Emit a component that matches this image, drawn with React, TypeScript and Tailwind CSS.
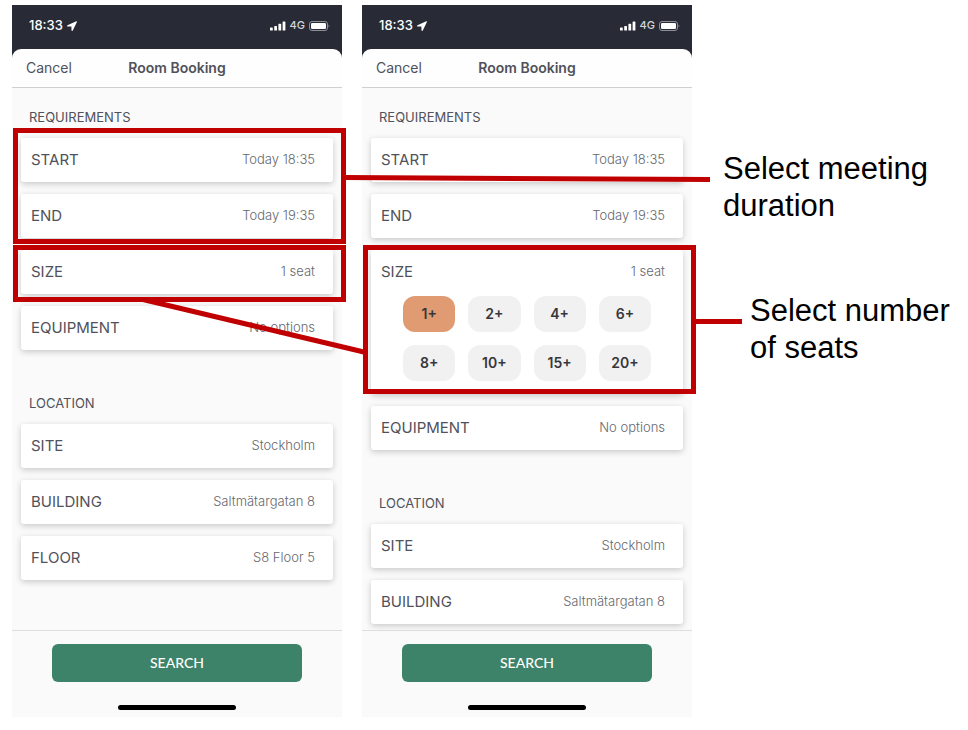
import React, { useState } from 'react';
import clsx from 'clsx';

const SEAT_OPTIONS = [1, 2, 4, 6, 8, 10, 15, 20];

const HIGHLIGHT = 'pointer-events-none absolute -left-2 -right-[13px] z-10 border-[5px] border-[#c00000]';

function StatusBar() {
  return (
    <div className="flex h-11 items-center justify-between pb-[3px] pl-[17px] pr-3 text-white">
      <div className="flex items-center gap-1">
        <span className="text-[13px] font-medium">18:33</span>
        <svg width="10" height="10" viewBox="0 0 10 10" fill="currentColor" aria-hidden="true">
          <path d="M9.3 .2 .5 4.3c-.6.3-.5 1.2.2 1.2h3.7l.1 3.8c0 .8 1 .9 1.3.2L9.9.9c.2-.5-.2-.9-.6-.7z" />
        </svg>
      </div>
      <div className="flex items-center gap-1">
        <svg width="16" height="10" viewBox="0 0 16 10" fill="currentColor" aria-hidden="true">
          <rect x="0" y="6.5" width="2.8" height="3" rx=".6" />
          <rect x="4.2" y="5" width="2.8" height="4.5" rx=".6" />
          <rect x="8.4" y="2.8" width="2.8" height="6.7" rx=".6" />
          <rect x="12.6" y=".5" width="2.8" height="9" rx=".6" />
        </svg>
        <span className="text-[11px] font-medium text-gray-300">4G</span>
        <svg width="21" height="10" viewBox="0 0 21 10" aria-hidden="true">
          <rect x=".5" y=".5" width="18" height="9" rx="2.5" fill="none" stroke="#8d8f96" />
          <rect x="2" y="2" width="15" height="6" rx="1.2" fill="#fff" />
          <path d="M19.6 3.4c1 .3 1 2.9 0 3.2z" fill="#8d8f96" />
        </svg>
      </div>
    </div>
  );
}

interface RowProps {
  label: string;
  value: string;
  children?: React.ReactNode;
}

function Row({ label, value, children }: RowProps) {
  return (
    <div className="rounded-[3px] bg-white shadow-[0_2px_6px_rgba(0,0,0,0.2)]">
      <button type="button" className="flex h-11 w-full items-center justify-between pl-2.5 pr-[18px]">
        <span className="text-[15px] text-[#50515a]">{label}</span>
        <span className="text-[13px] font-light text-[#66676e]">{value}</span>
      </button>
      {children}
    </div>
  );
}

interface SectionProps {
  title: string;
  children: React.ReactNode;
}

function Section({ title, children }: SectionProps) {
  return (
    <section>
      <h2 className="mb-[9px] pl-2 text-[13px] leading-6 text-[#50515a]">{title}</h2>
      <div className="flex flex-col gap-3">{children}</div>
    </section>
  );
}

interface SeatPickerProps {
  seats: number;
  onChange: (seats: number) => void;
}

function SeatPicker({ seats, onChange }: SeatPickerProps) {
  return (
    <div className="grid grid-cols-4 gap-[13px] px-8 pb-[13px] pt-[2px]">
      {SEAT_OPTIONS.map((option) => (
        <button
          key={option}
          type="button"
          aria-pressed={option === seats}
          onClick={() => onChange(option)}
          className={clsx(
            'h-9 rounded-xl text-sm font-semibold text-[#37373b]',
            option === seats ? 'bg-[#e09b72]' : 'bg-[#f1f1f1]',
          )}
        >
          {option}+
        </button>
      ))}
    </div>
  );
}

function Phone({ children }: { children: React.ReactNode }) {
  return (
    <div className="flex flex-1 flex-col bg-[#fafafa] font-['Inter','Liberation_Sans',sans-serif]">
      <div className="bg-[#282b36]">
        <StatusBar />
        <header className="grid h-[39px] grid-cols-3 items-center rounded-t-[9px] border-b border-[#cfcfd2] bg-[#fefefe] px-3.5 text-sm text-[#50515a]">
          <button type="button" className="justify-self-start">
            Cancel
          </button>
          <h1 className="whitespace-nowrap text-center font-semibold">Room Booking</h1>
        </header>
      </div>
      <div className="flex flex-1 flex-col gap-[41px] px-[9px] pt-[17px]">{children}</div>
      <footer className="border-t border-[#dedee0] px-10 pb-[7px] pt-[13px]">
        <button
          type="button"
          className="h-[38px] w-full rounded-md bg-[#3d8369] font-['Lato','Liberation_Sans',sans-serif] text-sm font-medium text-white"
        >
          SEARCH
        </button>
        <div className="mx-auto mt-[23px] h-[5px] w-[118px] rounded-full bg-black" />
      </footer>
    </div>
  );
}

function Connectors() {
  return (
    <svg
      className="pointer-events-none absolute left-0 top-0 z-20"
      width="968"
      height="730"
      stroke="#c00000"
      strokeWidth="5"
      aria-hidden="true"
    >
      <path d="M344 177.5 710 179.5" />
      <path d="M143 299.5 366 352.5" />
      <path d="M694 321.5H742" />
    </svg>
  );
}

function App() {
  const [seats, setSeats] = useState(1);
  const seatLabel = seats === 1 ? '1 seat' : `${seats} seats`;

  return (
    <main className="relative flex min-h-screen bg-white pb-[13px] pl-3 pt-[5px]">
      <div className="flex basis-[680px] gap-5">
        <Phone>
          <Section title="REQUIREMENTS">
            <div className="relative flex flex-col gap-3">
              <Row label="START" value="Today 18:35" />
              <Row label="END" value="Today 19:35" />
              <div className={clsx(HIGHLIGHT, '-bottom-1.5 -top-2.5')} />
            </div>
            <div className="relative">
              <Row label="SIZE" value={seatLabel} />
              <div className={clsx(HIGHLIGHT, '-bottom-2 -top-[5px]')} />
            </div>
            <Row label="EQUIPMENT" value="No options" />
          </Section>
          <Section title="LOCATION">
            <Row label="SITE" value="Stockholm" />
            <Row label="BUILDING" value="Saltmätargatan 8" />
            <Row label="FLOOR" value="S8 Floor 5" />
          </Section>
        </Phone>
        <Phone>
          <Section title="REQUIREMENTS">
            <Row label="START" value="Today 18:35" />
            <Row label="END" value="Today 19:35" />
            <div className="relative">
              <Row label="SIZE" value={seatLabel}>
                <SeatPicker seats={seats} onChange={setSeats} />
              </Row>
              <div className={clsx(HIGHLIGHT, '-top-[5px] bottom-0')} />
            </div>
            <Row label="EQUIPMENT" value="No options" />
          </Section>
          <Section title="LOCATION">
            <Row label="SITE" value="Stockholm" />
            <Row label="BUILDING" value="Saltmätargatan 8" />
          </Section>
        </Phone>
      </div>
      <div className="flex flex-1 flex-col gap-[68px] pl-[31px] pt-[145px] font-['Liberation_Sans',Arial,sans-serif] text-[31px] leading-[37px] text-black">
        <p>Select meeting duration</p>
        <p className="pl-[27px]">Select number of seats</p>
      </div>
      <Connectors />
    </main>
  );
}

export default App;
